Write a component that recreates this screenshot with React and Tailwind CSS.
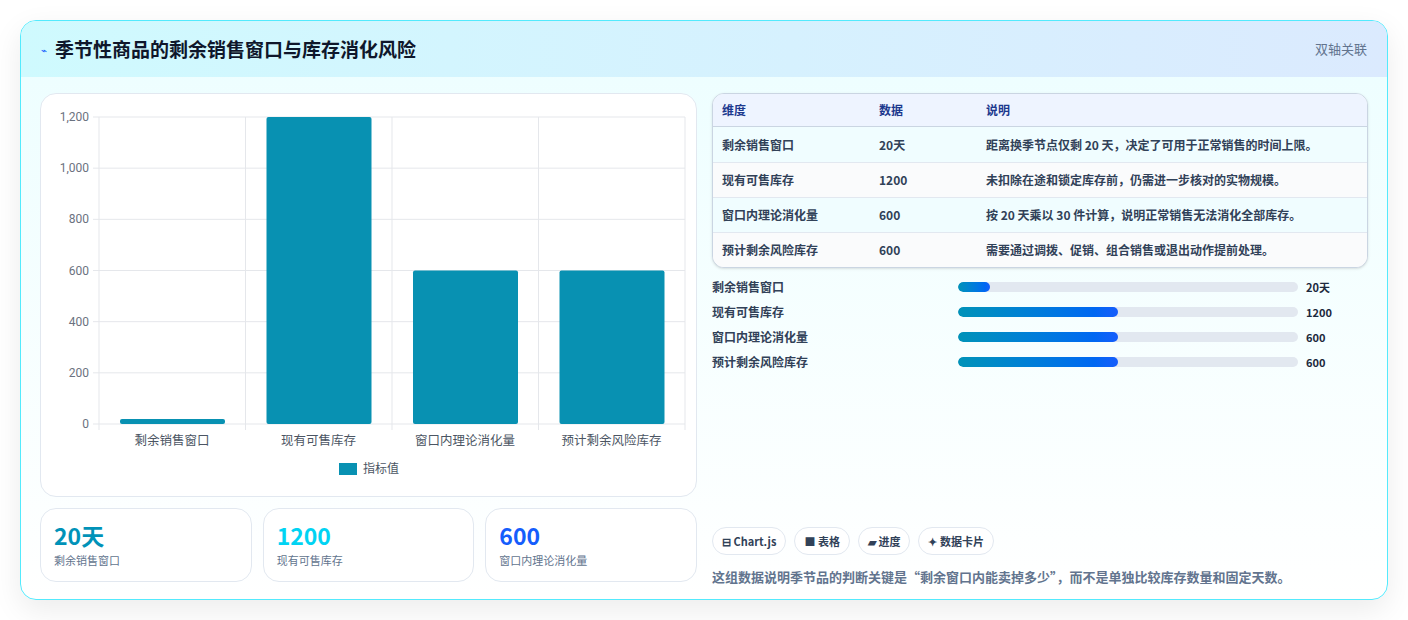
export default function App() {
  const font = { fontFamily: '"Noto Sans CJK SC", "Noto Sans", sans-serif' };
  const rows = [
    ["剩余销售窗口", "20天", "距离换季节点仅剩 20 天，决定了可用于正常销售的时间上限。"],
    ["现有可售库存", "1200", "未扣除在途和锁定库存前，仍需进一步核对的实物规模。"],
    ["窗口内理论消化量", "600", "按 20 天乘以 30 件计算，说明正常销售无法消化全部库存。"],
    ["预计剩余风险库存", "600", "需要通过调拨、促销、组合销售或退出动作提前处理。"],
  ];
  const prog = [["剩余销售窗口", 32, "20天"], ["现有可售库存", 160, "1200"], ["窗口内理论消化量", 160, "600"], ["预计剩余风险库存", 160, "600"]];
  const bars = [20, 1200, 600, 600];
  const cats = ["剩余销售窗口", "现有可售库存", "窗口内理论消化量", "预计剩余风险库存"];
  const y0 = 330, top = 23, h = y0 - top;
  return (
    <div className="w-[1408px] h-[620px] bg-white p-5 pb-5" style={font}>
      <div className="h-[580px] rounded-2xl border border-cyan-300 overflow-hidden flex flex-col bg-gradient-to-b from-[#ecfeff] to-white shadow-[0_10px_30px_rgba(0,0,0,0.08)]">
        <div className="h-14 shrink-0 flex items-center justify-between px-5 bg-gradient-to-r from-[#cffafe] to-[#dbeafe]">
          <div className="flex items-center gap-2">
            <span className="text-[10px] text-blue-600">⌁</span>
            <span className="text-[19px] font-bold text-slate-900">季节性商品的剩余销售窗口与库存消化风险</span>
          </div>
          <span className="text-[13px] text-slate-500">双轴关联</span>
        </div>
        <div className="flex gap-[15px] px-[19px] pt-4">
          <div className="w-[657px] flex flex-col gap-[11px]">
            <div className="h-[404px] rounded-2xl border border-slate-200 bg-white">
              <svg width="655" height="402" className="block">
                {[0, 200, 400, 600, 800, 1000, 1200].map((v) => {
                  const y = y0 - (v / 1200) * h;
                  return (
                    <g key={v}>
                      <line x1="52" x2="644" y1={y} y2={y} stroke="#e5e7eb" />
                      <text x="48" y={y + 4} textAnchor="end" fontSize="12" fill="#6b7280" fontFamily="Roboto, sans-serif">{v.toLocaleString("en-US")}</text>
                    </g>
                  );
                })}
                {[0, 1, 2, 3, 4].map((i) => (
                  <line key={i} x1={58 + i * 146.5} x2={58 + i * 146.5} y1={top} y2={y0 + 6} stroke="#e5e7eb" />
                ))}
                {bars.map((v, i) => {
                  const bh = (v / 1200) * h;
                  return <rect key={i} x={58 + i * 146.5 + 21} y={y0 - bh} width="105" height={bh} rx="2" fill="#0891b2" />;
                })}
                {cats.map((c, i) => (
                  <text key={c} x={58 + i * 146.5 + 73} y="351" textAnchor="middle" fontSize="12.5" fill="#4b5563">{c}</text>
                ))}
                <rect x="298" y="369" width="18" height="12" fill="#0891b2" />
                <text x="322" y="379" fontSize="12" fill="#4b5563">指标值</text>
              </svg>
            </div>
            <div className="grid grid-cols-3 gap-[11px]">
              {[["20天", "text-cyan-600", "剩余销售窗口"], ["1200", "text-cyan-400", "现有可售库存"], ["600", "text-blue-600", "窗口内理论消化量"]].map(([v, c, l]) => (
                <div key={l} className="h-[74px] rounded-2xl border border-slate-200 bg-white px-[13px] pt-[10px]">
                  <div className={`text-[23px] font-bold leading-8 ${c}`}>{v}</div>
                  <div className="text-[11px] text-slate-500 mt-[1px]">{l}</div>
                </div>
              ))}
            </div>
          </div>
          <div className="flex-1 flex flex-col">
            <div className="rounded-xl border border-slate-300 overflow-hidden bg-white shadow-sm">
              <div className="h-[33px] flex items-center bg-[#eef4ff] border-b border-slate-300 text-[12px] font-bold text-blue-900 px-[9px]">
                <div className="w-[157px]">维度</div><div className="w-[107px]">数据</div><div>说明</div>
              </div>
              {rows.map((r, i) => (
                <div key={i} className={`h-[35px] flex items-center px-[9px] text-[12px] font-semibold text-slate-700 ${i ? "border-t border-slate-200" : ""} ${i % 2 ? "bg-[#fafbfc]" : "bg-[#f0fdff]"}`}>
                  <div className="w-[157px]">{r[0]}</div><div className="w-[107px]">{r[1]}</div><div>{r[2]}</div>
                </div>
              ))}
            </div>
            <div className="mt-[11px] flex flex-col gap-[9px]">
              {prog.map(([l, w, v]) => (
                <div key={l} className="h-4 flex items-center text-[12px] font-semibold text-slate-700">
                  <div className="w-[246px]">{l}</div>
                  <div className="w-[340px] h-[10px] rounded-full bg-slate-200 overflow-hidden">
                    <div className="h-full rounded-full bg-gradient-to-r from-cyan-600 to-blue-600" style={{ width: w }} />
                  </div>
                  <div className="ml-2 text-[11px] font-bold text-slate-800">{v}</div>
                </div>
              ))}
            </div>
            <div className="mt-[157px] flex gap-2">
              {["⊟ Chart.js", "■ 表格", "▰ 进度", "✦ 数据卡片"].map((t) => (
                <span key={t} className="h-7 px-[9px] flex items-center rounded-full border border-slate-200 bg-white text-[11px] font-bold text-slate-700">{t}</span>
              ))}
            </div>
            <div className="mt-[12px] text-[13px] text-slate-500 font-semibold">这组数据说明季节品的判断关键是“剩余窗口内能卖掉多少”，而不是单独比较库存数量和固定天数。</div>
          </div>
        </div>
      </div>
    </div>
  );
}
